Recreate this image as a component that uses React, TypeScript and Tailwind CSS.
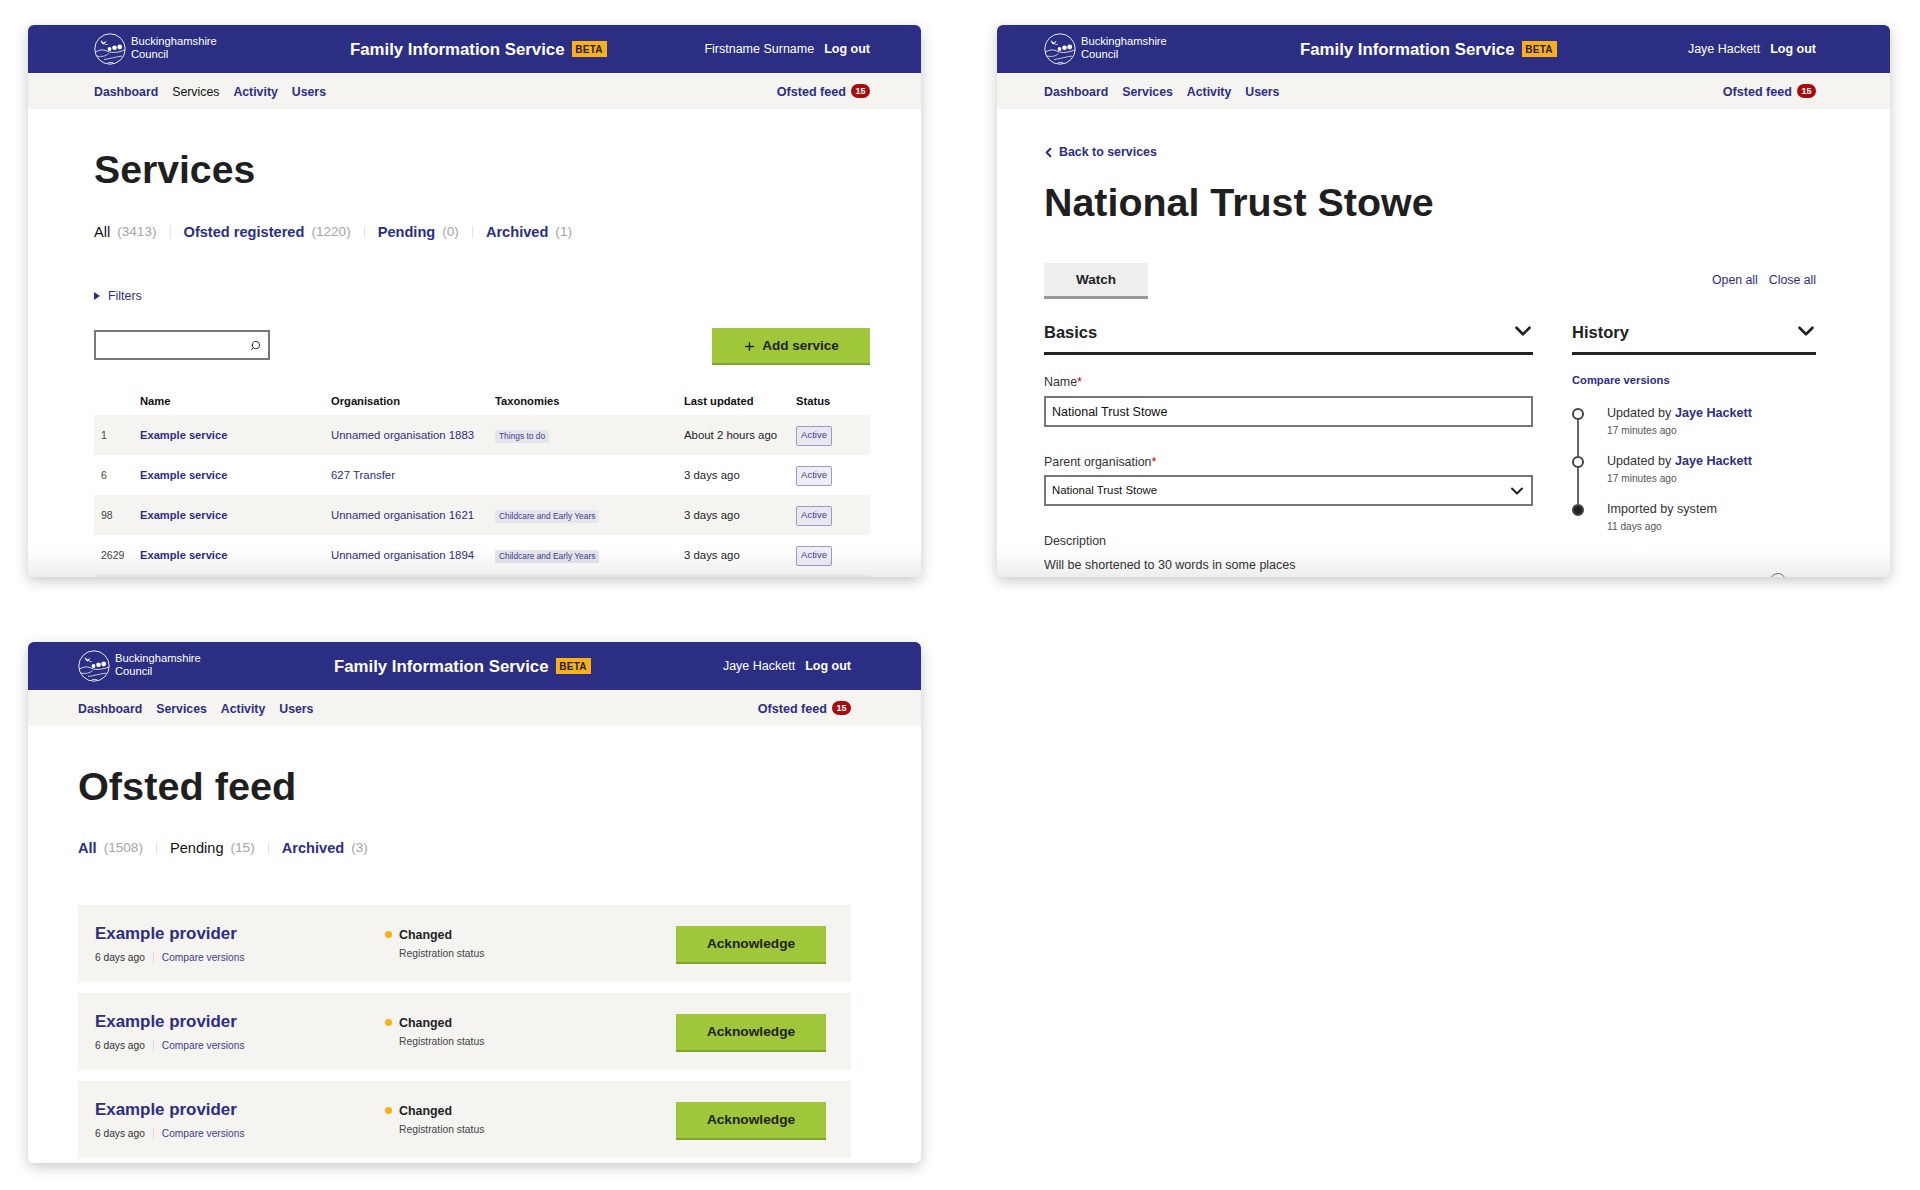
import React from 'react';
import { ChevronDown, ChevronLeft, Plus, Search } from 'lucide-react';

const services = [
  { id: 1, org: 'Unnamed organisation 1883', tax: 'Things to do', updated: 'About 2 hours ago' },
  { id: 6, org: '627 Transfer', tax: '', updated: '3 days ago' },
  { id: 98, org: 'Unnamed organisation 1621', tax: 'Childcare and Early Years', updated: '3 days ago' },
  { id: 2629, org: 'Unnamed organisation 1894', tax: 'Childcare and Early Years', updated: '3 days ago' },
];

function Logo() {
  return (
    <svg width="32" height="32" viewBox="0 0 32 32" fill="none" stroke="#fff" className="shrink-0">
      <circle cx="16" cy="16" r="15.2" strokeWidth="0.9" />
      <path d="M7 7.5l2.5 2.2 2.6-1.2-2 2.8-2-.8z" fill="#fff" strokeWidth="0.4" />
      <path d="M11 11.5h3" strokeWidth="0.6" />
      <circle cx="15.5" cy="16" r="1.9" fill="#fff" stroke="none" />
      <circle cx="20.5" cy="14.8" r="2.3" fill="#fff" stroke="none" />
      <circle cx="25.7" cy="14" r="2.4" fill="#fff" stroke="none" />
      <path d="M1 19.5c5-3.5 9-3 13-1 4 1.6 10 1.2 17-1.6" strokeWidth="0.8" />
      <path d="M2.5 23c5 1 9 .4 12-2.4M10 26.5c5-.5 11-2.5 18-3.5" strokeWidth="0.7" />
      <path d="M14 29.5h5" strokeWidth="0.7" />
    </svg>
  );
}

function TopBars({ user, servicesCurrent, gap }: { user: string; servicesCurrent?: boolean; gap: string }) {
  return (
    <>
      <div className={`h-12 bg-[#2c2e84] flex items-center text-white ${gap}`}>
        <div className="flex items-center gap-[5px] w-[123px] shrink-0">
          <Logo />
          <div className="-mt-[3px] text-[11.2px] leading-[12.5px] whitespace-nowrap">Buckinghamshire<br />Council</div>
        </div>
        <div className="ml-[133px] flex items-center">
          <span className="pt-[2px] text-[16.8px] font-bold leading-6 whitespace-nowrap">Family Information Service</span>
          <span className="ml-[7px] h-4 w-[35px] flex items-center justify-center bg-[#fbb018] text-[#222] text-[10px] font-bold tracking-[0.3px]">BETA</span>
        </div>
        <div className="ml-auto flex items-center gap-[10px] text-[12.5px] leading-4 whitespace-nowrap">
          <span>{user}</span>
          <span className="font-bold">Log out</span>
        </div>
      </div>
      <div className={`h-9 pt-[2px] bg-[#f5f4f1] flex items-center text-[12.3px] leading-4 font-bold text-[#2c2e84] ${gap}`}>
        <span>Dashboard</span>
        {servicesCurrent ? (
          <span className="ml-[14px] font-normal text-[#111]">Services</span>
        ) : (
          <span className="ml-[14px]">Services</span>
        )}
        <span className="ml-[14px]">Activity</span>
        <span className="ml-[14px]">Users</span>
        <span className="ml-auto text-[12.6px]">Ofsted feed</span>
        <span className="ml-[5px] -mt-[2px] h-[14px] w-[19px] rounded-full bg-[#a80b0b] text-white text-[9px] flex items-center justify-center">15</span>
      </div>
    </>
  );
}

function Tab({ label, count, current, last }: { label: string; count: number; current?: boolean; last?: boolean }) {
  return (
    <>
      <span className={current ? 'text-[#111]' : 'font-bold text-[#2c2e84]'}>{label}</span>
      <span className="ml-[7px] text-[13.6px] text-[#a5a5a5]">({count})</span>
      {!last && <span className="mx-[13px] h-[12px] w-px bg-[#e4e3df]" />}
    </>
  );
}

function ServicesCard() {
  return (
    <section className="relative h-[552px] bg-white rounded-[6px] overflow-hidden shadow-[0_4px_14px_rgba(0,0,0,0.22)]">
      <TopBars user="Firstname Surname" servicesCurrent gap="pl-[66px] pr-[51px]" />
      <div className="pl-[66px] pr-[51px] pt-[37px]">
        <h1 className="text-[39.2px] leading-12 font-bold text-[#1f1f1f]">Services</h1>
        <div className="mt-7 h-5 flex items-center text-[14.6px] leading-5">
          <Tab label="All" count={3413} current />
          <Tab label="Ofsted registered" count={1220} />
          <Tab label="Pending" count={0} />
          <Tab label="Archived" count={1} last />
        </div>
        <div className="mt-[46px] h-4 flex items-center text-[12.4px] text-[#2c2e84]">
          <svg width="6" height="8" viewBox="0 0 6 8" fill="#2c2e84"><path d="M0 0l6 4-6 4z" /></svg>
          <span className="ml-[8px]">Filters</span>
        </div>
        <div className="mt-6 h-[37px] flex items-start justify-between">
          <div className="mt-[2px] w-[176px] h-[30px] border-2 border-[#777] flex items-center justify-end pr-[7px]">
            <Search size={11} strokeWidth={2} className="-scale-x-100 text-[#222]" />
          </div>
          <button className="w-[158px] h-[37px] pt-[2px] bg-[#a0c63a] border-b-2 border-[#7da52f] flex items-center justify-center gap-[6px] text-[13.5px] font-bold text-[#222]">
            <Plus size={13} strokeWidth={2.5} />
            Add service
          </button>
        </div>
        <div className="mt-[26px] h-5 mb-1 grid grid-cols-[46px_191px_164px_189px_112px_1fr] items-center text-[11.2px] font-bold text-[#111]">
          <span />
          <span>Name</span>
          <span>Organisation</span>
          <span>Taxonomies</span>
          <span>Last updated</span>
          <span>Status</span>
        </div>
        {services.map((s, i) => (
          <div
            key={s.id}
            className={`h-10 pt-px grid grid-cols-[46px_191px_164px_189px_112px_1fr] items-center text-[11.4px] ${i % 2 === 0 ? 'bg-[#f5f4f1]' : ''}`}
          >
            <span className="pl-[7px] text-[10.5px] text-[#444]">{s.id}</span>
            <span className="text-[11.15px] font-bold text-[#2c2e84]">Example service</span>
            <span className="text-[#2c2e84] whitespace-nowrap">{s.org}</span>
            <span>
              {s.tax && (
                <span className="inline-block h-[13px] leading-[13px] px-[4px] bg-[#e5e5ee] text-[8.4px] text-[#3c3d90] rounded-[1px]">{s.tax}</span>
              )}
            </span>
            <span className="text-[#222] whitespace-nowrap">{s.updated}</span>
            <span>
              <span className={`w-9 h-5 flex items-center justify-center border border-[#9c9ccb] rounded-[2px] text-[9.5px] text-[#3c3d90] ${i % 2 === 0 ? 'bg-[#e8e8f0]' : 'bg-[#eeeef8]'}`}>Active</span>
            </span>
          </div>
        ))}
        <div className="h-10 bg-[#f5f4f1]" />
      </div>
      <div className="absolute inset-x-0 bottom-0 h-7 bg-linear-to-b from-black/0 to-black/[0.07]" />
    </section>
  );
}

function HistoryItem({ text, who, when, solid, last }: { text: string; who?: string; when: string; solid?: boolean; last?: boolean }) {
  return (
    <div className="h-12 flex">
      <div className="w-3 flex flex-col items-center">
        <span className={`w-3 h-3 shrink-0 rounded-full border-2 border-[#444] ${solid ? 'bg-[#222]' : 'bg-white'}`} />
        {!last && <span className="flex-1 w-[2px] bg-[#666]" />}
      </div>
      <div className="ml-[23px] -mt-[3px]">
        <div className="h-4 text-[12.6px] leading-4 text-[#333] whitespace-nowrap">
          {text} {who && <span className="font-bold text-[#2c2e84]">{who}</span>}
        </div>
        <div className="mt-[2px] h-4 text-[10.2px] leading-4 text-[#555]">{when}</div>
      </div>
    </div>
  );
}

function DetailCard() {
  return (
    <section className="relative h-[552px] bg-white rounded-[6px] overflow-hidden shadow-[0_4px_14px_rgba(0,0,0,0.22)]">
      <TopBars user="Jaye Hackett" gap="pl-[47px] pr-[74px]" />
      <div className="pl-[47px] pr-[74px] pt-[35px]">
        <div className="h-4 flex items-center text-[12.4px] leading-4 font-bold text-[#2c2e84]">
          <ChevronLeft size={15} strokeWidth={3.2} className="-ml-[3px]" />
          <span className="ml-[3px]">Back to services</span>
        </div>
        <h1 className="mt-[18px] text-[39.4px] leading-12 font-bold text-[#1f1f1f] whitespace-nowrap">National Trust Stowe</h1>
        <div className="mt-[37px] h-9 flex items-center justify-between">
          <button className="w-[104px] h-9 pt-[2px] bg-[#eeeeee] border-b-[3px] border-[#999] text-[13.5px] font-bold text-[#222]">Watch</button>
          <div className="-mt-[1px] flex gap-[11px] text-[12.3px] text-[#2c2e84]">
            <span>Open all</span>
            <span>Close all</span>
          </div>
        </div>
        <div className="mt-[21px] grid grid-cols-[489px_244px] gap-x-[39px]">
          <div>
            <div className="h-6 pb-2 box-content border-b-[3px] border-[#222] flex items-center justify-between">
              <h2 className="text-[16.5px] leading-6 font-bold text-[#222]">Basics</h2>
              <ChevronDown size={26} strokeWidth={2.4} className="-mr-[3px] -mt-[2px] text-[#222]" />
            </div>
            <div className="mt-[19px] h-4 text-[12.4px] leading-4 text-[#333]">Name<span className="text-[#c00]">*</span></div>
            <div className="mt-[6px] h-[31px] pt-[2px] border-2 border-[#777] flex items-center pl-[6px] text-[12.5px] text-[#111]">National Trust Stowe</div>
            <div className="mt-[27px] h-4 text-[12.4px] leading-4 text-[#333]">Parent organisation<span className="text-[#c00]">*</span></div>
            <div className="mt-[5px] h-[31px] border-2 border-[#777] flex items-center justify-between pl-[6px] pr-[4px] text-[11.4px] text-[#111]">
              National Trust Stowe
              <ChevronDown size={20} strokeWidth={2.4} className="text-[#222]" />
            </div>
            <div className="mt-[27px] h-4 text-[12.4px] leading-4 text-[#333]">Description</div>
            <div className="mt-2 h-4 text-[12.5px] leading-4 text-[#333] whitespace-nowrap">Will be shortened to 30 words in some places</div>
          </div>
          <div>
            <div className="h-6 pb-2 box-content border-b-[3px] border-[#222] flex items-center justify-between">
              <h2 className="text-[16.5px] leading-6 font-bold text-[#222]">History</h2>
              <ChevronDown size={26} strokeWidth={2.4} className="-mr-[3px] -mt-[2px] text-[#222]" />
            </div>
            <div className="mt-[17px] h-4 text-[11.2px] leading-4 font-bold text-[#2c2e84]">Compare versions</div>
            <div className="mt-5">
              <HistoryItem text="Updated by" who="Jaye Hackett" when="17 minutes ago" />
              <HistoryItem text="Updated by" who="Jaye Hackett" when="17 minutes ago" />
              <HistoryItem text="Imported by system" when="11 days ago" solid last />
            </div>
            <div className="mt-[20px] flex justify-between pr-[30px] text-[16.5px] leading-6 font-bold text-[#222]">
              <span>Notes</span>
              <span className="w-4 h-4 rounded-full border border-[#777] mt-[1px]" />
            </div>
          </div>
        </div>
      </div>
      <div className="absolute inset-x-0 bottom-0 h-7 bg-linear-to-b from-black/0 to-black/[0.07]" />
    </section>
  );
}

function FeedRow() {
  return (
    <div className="h-[77px] bg-[#f5f4f1] flex items-center pl-[17px] pr-[25px]">
      <div className="w-[290px]">
        <div className="text-[16.9px] leading-6 font-bold text-[#2c2e84]">Example provider</div>
        <div className="mt-[5px] flex items-center h-[14px] text-[10.2px] leading-[14px]">
          <span className="text-[#333]">6 days ago</span>
          <span className="mx-[8px] h-[10px] w-px bg-[#d9d8d4]" />
          <span className="text-[#3c3d90]">Compare versions</span>
        </div>
      </div>
      <div className="flex -mt-[1px]">
        <span className="mt-[6px] w-[7px] h-[7px] rounded-full bg-[#fbb018]" />
        <div className="ml-[7px]">
          <div className="text-[12.4px] leading-5 font-bold text-[#222]">Changed</div>
          <div className="mt-[1px] text-[10.3px] leading-4 text-[#444]">Registration status</div>
        </div>
      </div>
      <button className="ml-auto mt-[2px] w-[150px] h-[38px] pt-[2px] bg-[#a0c63a] border-b-2 border-[#7da52f] text-[13.7px] font-bold text-[#222]">Acknowledge</button>
    </div>
  );
}

function FeedCard() {
  return (
    <section className="h-[521px] bg-white rounded-[6px] overflow-hidden shadow-[0_4px_14px_rgba(0,0,0,0.22)]">
      <TopBars user="Jaye Hackett" gap="pl-[50px] pr-[70px]" />
      <div className="pl-[50px] pr-[70px] pt-9">
        <h1 className="text-[39.7px] leading-12 font-bold text-[#1f1f1f]">Ofsted feed</h1>
        <div className="mt-7 h-5 flex items-center text-[14.6px] leading-5">
          <Tab label="All" count={1508} />
          <Tab label="Pending" count={15} current />
          <Tab label="Archived" count={3} last />
        </div>
        <div className="mt-[47px] flex flex-col gap-[11px]">
          <FeedRow />
          <FeedRow />
          <FeedRow />
        </div>
      </div>
    </section>
  );
}

export default function App() {
  return (
    <div className="w-[1920px] h-[1190px] bg-white overflow-hidden pt-[25px] pl-[28px] font-['Liberation_Sans',Arial,sans-serif]">
      <div className="grid grid-cols-[893px_893px] gap-x-[76px] gap-y-[65px] items-start">
        <ServicesCard />
        <DetailCard />
        <FeedCard />
      </div>
    </div>
  );
}
